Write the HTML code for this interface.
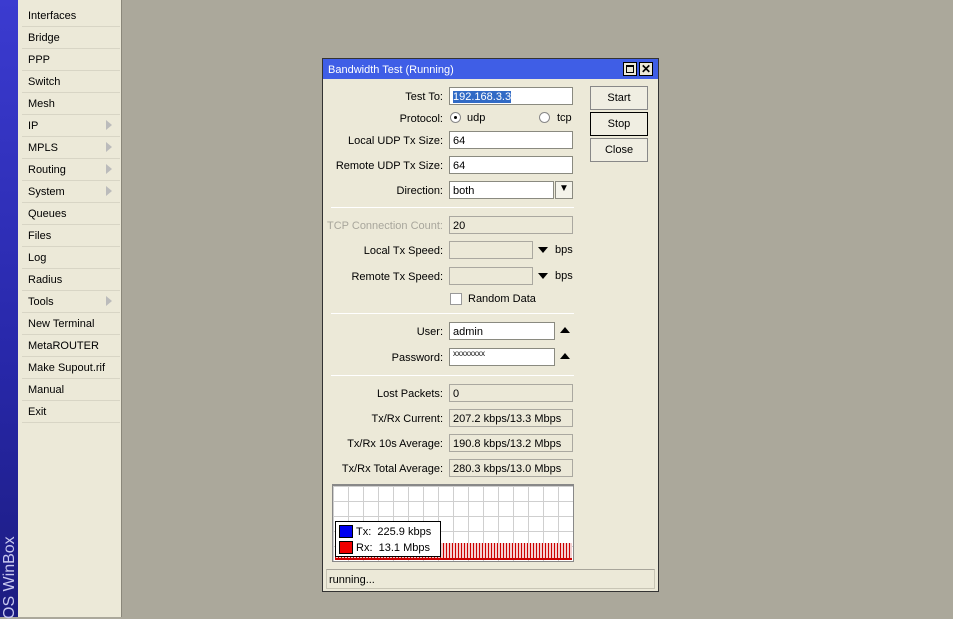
<!DOCTYPE html>
<html><head><style>
*{margin:0;padding:0;box-sizing:border-box}
body{width:953px;height:617px;overflow:hidden;background:#aba89b;font-family:"Liberation Sans",sans-serif;font-size:11px;color:#000;position:relative}
.a{position:absolute}
#strip{left:0;top:0;width:18px;height:617px;background:linear-gradient(#3b3bd0,#2727a8 60%,#1c1c80)}
#vt{left:-40px;top:560px;width:100px;transform:rotate(-90deg);color:#c8c8f0;font-size:16px;white-space:nowrap}
#menu{left:18px;top:0;width:104px;height:617px;background:#ece9d8;border-right:1px solid #8a877a}
.mi{position:absolute;left:4px;width:98px;height:22px;line-height:23px;padding-left:6px;border-bottom:1px solid #d8d5c5}
.tri{position:absolute;right:8px;top:5px;width:0;height:0;border-left:6px solid #bbb;border-top:5px solid transparent;border-bottom:5px solid transparent}
#dlg{left:322px;top:58px;width:337px;height:534px;background:#ece9d8;border:1px solid #333}
#title{left:0;top:0;width:335px;height:20px;background:#3f5ee6;color:#fff;font-size:11px;line-height:22px;padding-left:5px}
.tb{position:absolute;top:3px;width:14px;height:14px;background:#ece9d8;border:1px solid #000}
.lbl{position:absolute;right:215px;text-align:right;white-space:nowrap;line-height:20px}
.in{position:absolute;left:126px;height:18px;background:#fff;border:1px solid #8a8a80;line-height:18px;padding-left:3px;white-space:nowrap;overflow:hidden}
.dis{background:#ece9d8;border-color:#aaa8a0}
.btn{position:absolute;left:267px;width:58px;height:24px;border:1px solid #888;background:#f0eee2;text-align:center;line-height:23px}
.sep{position:absolute;left:8px;width:243px;height:1px;background:#d6d3c3;border-bottom:1px solid #fff}
.dn{position:absolute;width:0;height:0;border-left:5px solid transparent;border-right:5px solid transparent;border-top:6px solid #000}
.up{position:absolute;width:0;height:0;border-left:5px solid transparent;border-right:5px solid transparent;border-bottom:6px solid #000}
</style></head><body>
<div class="a" id="strip"></div>
<div class="a" id="vt">OS WinBox</div>
<div class="a" id="menu">
<div class="mi" style="top:5px">Interfaces</div>
<div class="mi" style="top:27px">Bridge</div>
<div class="mi" style="top:49px">PPP</div>
<div class="mi" style="top:71px">Switch</div>
<div class="mi" style="top:93px">Mesh</div>
<div class="mi" style="top:115px">IP<span class="tri"></span></div>
<div class="mi" style="top:137px">MPLS<span class="tri"></span></div>
<div class="mi" style="top:159px">Routing<span class="tri"></span></div>
<div class="mi" style="top:181px">System<span class="tri"></span></div>
<div class="mi" style="top:203px">Queues</div>
<div class="mi" style="top:225px">Files</div>
<div class="mi" style="top:247px">Log</div>
<div class="mi" style="top:269px">Radius</div>
<div class="mi" style="top:291px">Tools<span class="tri"></span></div>
<div class="mi" style="top:313px">New Terminal</div>
<div class="mi" style="top:335px">MetaROUTER</div>
<div class="mi" style="top:357px">Make Supout.rif</div>
<div class="mi" style="top:379px">Manual</div>
<div class="mi" style="top:401px">Exit</div>
</div>
<div class="a" id="dlg">
<div class="a" id="title">Bandwidth Test (Running)
<span class="tb" style="left:300px"><span class="a" style="left:2px;top:2px;width:8px;height:8px;border:1px solid #000;border-top-width:2px"></span></span>
<span class="tb" style="left:316px;text-align:center;line-height:12px;color:#000;font-weight:bold;font-size:12px">✕</span></div>

<div class="lbl" style="top:28px">Test To:</div>
<div class="in" style="top:28px;width:124px"><span style="background:#316ac5;color:#fff">192.168.3.3</span></div>
<div class="lbl" style="top:50px">Protocol:</div>
<div class="a" style="left:127px;top:53px;width:11px;height:11px;border-radius:50%;background:#fff;border:1px solid #888"><span class="a" style="left:3px;top:3px;width:3px;height:3px;background:#000;border-radius:50%"></span></div>
<div class="a" style="left:144px;top:53px">udp</div>
<div class="a" style="left:216px;top:53px;width:11px;height:11px;border-radius:50%;background:#fff;border:1px solid #888"></div>
<div class="a" style="left:234px;top:53px">tcp</div>
<div class="lbl" style="top:72px">Local UDP Tx Size:</div>
<div class="in" style="top:72px;width:124px">64</div>
<div class="lbl" style="top:97px">Remote UDP Tx Size:</div>
<div class="in" style="top:97px;width:124px">64</div>
<div class="lbl" style="top:122px">Direction:</div>
<div class="in" style="top:122px;width:105px">both</div>
<div class="a" style="left:232px;top:122px;width:18px;height:18px;border:1px solid #8a8a80;background:#f4f3ea;text-align:center;line-height:14px;font-size:10px">▼</div>
<div class="sep" style="top:148px"></div>
<div class="lbl" style="top:157px;color:#a8a69c">TCP Connection Count:</div>
<div class="in dis" style="top:157px;width:124px">20</div>
<div class="lbl" style="top:182px">Local Tx Speed:</div>
<div class="in dis" style="top:182px;width:84px"></div>
<div class="dn" style="left:215px;top:188px"></div>
<div class="a" style="left:232px;top:185px">bps</div>
<div class="lbl" style="top:208px">Remote Tx Speed:</div>
<div class="in dis" style="top:208px;width:84px"></div>
<div class="dn" style="left:215px;top:214px"></div>
<div class="a" style="left:232px;top:211px">bps</div>
<div class="a" style="left:127px;top:234px;width:12px;height:12px;background:#fff;border:1px solid #999"></div>
<div class="a" style="left:145px;top:234px">Random Data</div>
<div class="sep" style="top:254px"></div>
<div class="lbl" style="top:263px">User:</div>
<div class="in" style="top:263px;width:106px">admin</div>
<div class="up" style="left:237px;top:268px"></div>
<div class="lbl" style="top:289px">Password:</div>
<div class="in" style="top:289px;width:106px;font-size:8px;line-height:10px">xxxxxxxx</div>
<div class="up" style="left:237px;top:294px"></div>
<div class="sep" style="top:316px"></div>
<div class="lbl" style="top:325px">Lost Packets:</div>
<div class="in dis" style="top:325px;width:124px">0</div>
<div class="lbl" style="top:350px">Tx/Rx Current:</div>
<div class="in dis" style="top:350px;width:124px">207.2 kbps/13.3 Mbps</div>
<div class="lbl" style="top:375px">Tx/Rx 10s Average:</div>
<div class="in dis" style="top:375px;width:124px">190.8 kbps/13.2 Mbps</div>
<div class="lbl" style="top:400px">Tx/Rx Total Average:</div>
<div class="in dis" style="top:400px;width:124px">280.3 kbps/13.0 Mbps</div>

<div class="a" style="left:9px;top:425px;width:242px;height:78px;border:1px solid #888;border-top:2px solid #888;background-color:#fff;background-image:linear-gradient(90deg,#cfcfcf 1px,transparent 1px),linear-gradient(#cfcfcf 1px,transparent 1px);background-size:15px 15px"></div>
<div class="a" style="left:12px;top:484px;width:237px;height:17px;background:repeating-linear-gradient(90deg,#c00 0 1px,#f4d0d0 1px 3px)"></div>
<div class="a" style="left:12px;top:499px;width:237px;height:2px;background:#c00"></div>
<div class="a" style="left:12px;top:462px;width:106px;height:36px;background:#fff;border:1px solid #000;line-height:16px">
<div style="position:absolute;left:3px;top:3px;width:14px;height:13px;background:#0000f0;border:1px solid #000"></div>
<div style="position:absolute;left:20px;top:2px">Tx:&nbsp; 225.9 kbps</div>
<div style="position:absolute;left:3px;top:19px;width:14px;height:13px;background:#f00000;border:1px solid #000"></div>
<div style="position:absolute;left:20px;top:18px">Rx:&nbsp; 13.1 Mbps</div>
</div>
<div class="a" style="left:3px;top:510px;width:329px;height:20px;border:1px solid #c8c5b5;border-top-color:#a8a59a;line-height:20px;padding-left:2px">running...</div>

<div class="btn" style="top:27px">Start</div>
<div class="btn" style="top:53px;border-color:#000">Stop</div>
<div class="btn" style="top:79px">Close</div>
</div>
</body></html>
